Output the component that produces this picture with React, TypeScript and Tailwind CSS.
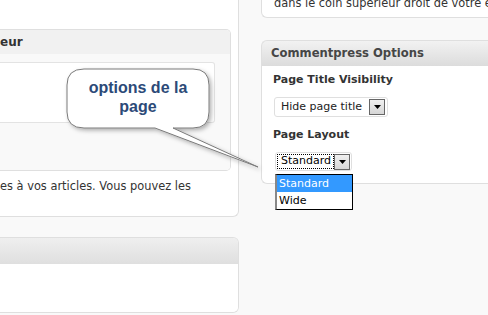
export default function App() {
  const font = { fontFamily: '"DejaVu Sans", Verdana, sans-serif' }

  return (
    <div className="relative w-[488px] h-[315px] overflow-hidden bg-[#f9f9f9] text-[#333]" style={font}>
      <div className="flex">
        {/* Left column */}
        <div className="w-[239px] shrink-0 flex flex-col">
          <div className="h-[217px] bg-white border-r border-b border-[#dfdfdf] rounded-br-[6px] pt-[29px] pr-[7px] flex flex-col">
            <div className="h-[142px] border-t border-r border-b border-[#dfdfdf] rounded-tr-[5px] rounded-br-[5px] flex flex-col overflow-hidden">
              <div className="h-[24px] bg-[#f1f1f1] flex items-center text-[12px] font-bold text-[#333]">eur</div>
              <div className="flex-1 bg-[#f9f9f9] pt-[8px] pr-[15px]">
                <div className="h-[61px] bg-white border-t border-r border-b border-[#e3e3e3] rounded-r-[3px]" />
              </div>
            </div>
            <p className="mt-[8px] text-[11.4px] leading-[14px] whitespace-nowrap">es à vos articles. Vous pouvez les</p>
          </div>
          <div className="mt-[20px] h-[76px] border-t border-r border-b border-[#dfdfdf] rounded-r-[6px] overflow-hidden flex flex-col">
            <div className="h-[26px] bg-gradient-to-b from-[#efefef] to-[#dfdfdf]" />
            <div className="flex-1 bg-white" />
          </div>
        </div>

        {/* Right column */}
        <div className="ml-[22px] w-[260px] shrink-0 flex flex-col">
          <div className="h-[18px] bg-white border-l border-b border-[#dfdfdf] rounded-bl-[6px] pl-[12px] overflow-hidden">
            <p className="-mt-[4px] text-[11.4px] leading-[14px] whitespace-nowrap">dans le coin supérieur droit de votre éditeur</p>
          </div>

          <div className="mt-[22px] flex flex-col">
            <div className="h-[26px] bg-gradient-to-b from-[#f2f2f2] to-[#dcdcdc] border-t border-l border-[#dfdfdf] rounded-tl-[6px] pl-[9px] flex items-center">
              <span className="text-[11.6px] font-bold text-[#464646] whitespace-nowrap">Commentpress Options</span>
            </div>
            <div className="bg-white border-l border-b border-[#dfdfdf] rounded-bl-[6px] pl-[11px] pt-[7px] pb-[12px]">
              <p className="text-[11px] leading-[14px] font-bold text-[#333]">Page Title Visibility</p>
              <div className="mt-[10px] ml-[1px] w-[114px] h-[20px] border border-[#dfdfdf] rounded-[3px] bg-white flex items-center pl-[6px] pr-[2px] justify-between">
                <span className="text-[11px] text-[#222] whitespace-nowrap">Hide page title</span>
                <Arrow />
              </div>
              <p className="mt-[11px] text-[11px] leading-[14px] font-bold text-[#333]">Page Layout</p>
              <div className="mt-[10px] ml-[2px] w-[77px] h-[19px] border border-[#dfdfdf] rounded-[3px] bg-white flex items-center pl-[1px] pr-[1px]">
                <div className="flex-1 h-[15px] border border-dotted border-black flex items-center pl-[3px] overflow-hidden">
                  <span className="text-[11px] text-black whitespace-nowrap">Standard</span>
                </div>
                <Arrow />
              </div>
            </div>
          </div>
        </div>
      </div>

      {/* Open dropdown list */}
      <div className="absolute left-[275px] top-[174px] w-[78px] border border-black border-l-[2px] border-l-[#888] bg-white text-[11px] leading-[17px]">
        <div className="bg-[#3399ff] text-white pl-[2px]">Standard</div>
        <div className="text-black pl-[2px]">Wide</div>
      </div>

      {/* Callout bubble */}
      <svg className="absolute inset-0 pointer-events-none" width="488" height="315" viewBox="0 0 488 315">
        <defs>
          <filter id="sh" x="-20%" y="-20%" width="140%" height="140%">
            <feDropShadow dx="2" dy="2" stdDeviation="2" floodColor="#000" floodOpacity="0.3" />
          </filter>
        </defs>
        <path
          d="M84 69 H193 Q209 69 209 85 V112 Q209 128 193 128 H173 L258 167 L155 128 H84 Q67 128 67 112 V85 Q67 69 84 69 Z"
          fill="#fff"
          stroke="#7a7a7a"
          strokeWidth="1"
          filter="url(#sh)"
        />
      </svg>
      <div
        className="absolute left-[67px] top-[78px] w-[142px] text-center text-[16px] leading-[19px] font-bold text-[#2c4a78]"
        style={{ fontFamily: '"Liberation Sans", Arial, sans-serif' }}
      >
        options de la
        <br />
        page
      </div>
    </div>
  )
}

function Arrow() {
  return (
    <div className="w-[16px] h-[16px] shrink-0 border border-[#666] bg-gradient-to-b from-[#f0f0f0] to-[#d6d6d6] flex items-center justify-center">
      <svg width="7" height="4" viewBox="0 0 7 4">
        <path d="M0 0 H7 L3.5 4 Z" fill="#000" />
      </svg>
    </div>
  )
}
